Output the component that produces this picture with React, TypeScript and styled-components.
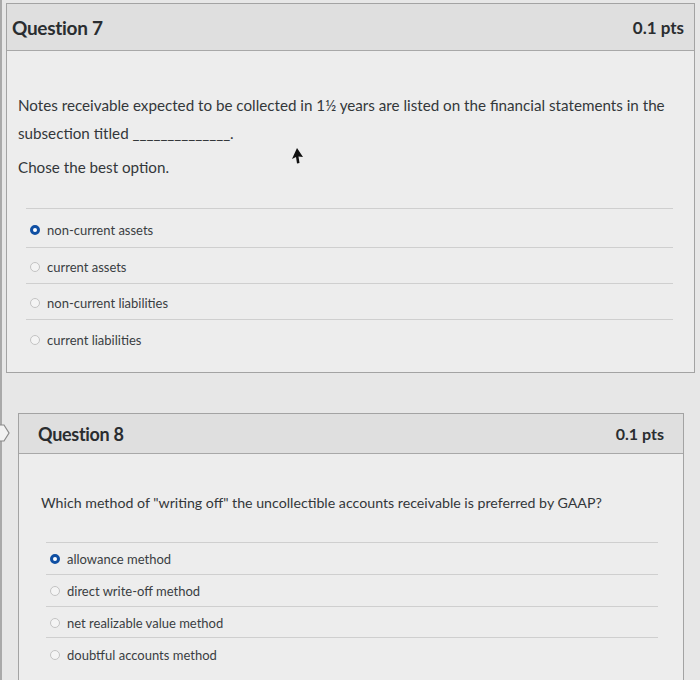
import React from "react";
import styled, { createGlobalStyle } from "styled-components";

const Global = createGlobalStyle`
  html, body { margin: 0; padding: 0; }
  body {
    background: #e7e7e7;
    font-family: Lato, "Open Sans", "Liberation Sans", sans-serif;
    color: #2f3337;
    width: 700px;
    height: 680px;
    overflow: hidden;
  }
`;

const Page = styled.div`
  position: relative;
  height: 680px;
  border-left: 2px solid #a9a9a9;
  padding-top: 3px;
  box-sizing: border-box;
  display: flex;
  flex-direction: column;
  gap: 40px;
`;

const Card = styled.section<{ $left: number; $right: number }>`
  margin-left: ${(p) => p.$left}px;
  margin-right: ${(p) => p.$right}px;
  border: 1px solid #a3a3a3;
  background: #ededed;
`;

const Header = styled.header<{ $h: number; $padL: number; $padR: number }>`
  height: ${(p) => p.$h}px;
  display: flex;
  align-items: center;
  justify-content: space-between;
  padding: 0 ${(p) => p.$padR}px 0 ${(p) => p.$padL}px;
  background: #dfdfdf;
  border-bottom: 1px solid #a8a8a8;
`;

const Title = styled.h2<{ $size: number }>`
  margin: 0;
  font-size: ${(p) => p.$size}px;
  font-weight: 700;
  color: #2a2d30;
  letter-spacing: -0.3px;
`;

const Points = styled.span<{ $size: number }>`
  font-size: ${(p) => p.$size}px;
  font-weight: 700;
  color: #2a2d30;
`;

const Body = styled.div<{ $top: number; $left: number; $bottom: number }>`
  padding: ${(p) => p.$top}px ${(p) => p.$left}px ${(p) => p.$bottom}px;
`;

const Para = styled.p<{ $size: number }>`
  margin: 0 0 6px;
  font-size: ${(p) => p.$size}px;
  line-height: 28px;
  color: #33373a;
`;

const Answers = styled.div<{ $mt: number; $inset: number; $insetR: number }>`
  margin: ${(p) => p.$mt}px ${(p) => p.$insetR}px 0 ${(p) => p.$inset}px;
  border-top: 1px solid #cfcfcf;
  display: flex;
  flex-direction: column;
`;

const Row = styled.label<{ $h: number; $pt: number }>`
  height: ${(p) => p.$h}px;
  box-sizing: border-box;
  display: flex;
  align-items: center;
  gap: 7px;
  padding: ${(p) => p.$pt}px 0 0 4px;
  font-size: 13px;
  color: #3a3e42;
  border-bottom: 1px solid #cfcfcf;
  &:last-child { border-bottom: none; }
`;

const Radio = styled.span<{ $on: boolean }>`
  width: 10px;
  height: 10px;
  box-sizing: border-box;
  border-radius: 50%;
  flex: none;
  background: ${(p) => (p.$on ? "#ffffff" : "#f4f4f4")};
  border: ${(p) => (p.$on ? "3px solid #0f4fa3" : "1px solid #c3c3c3")};
`;

const Flag = styled.svg`
  position: absolute;
  left: -2px;
  top: 424px;
`;

const Cursor = styled.svg`
  position: absolute;
  left: 288px;
  top: 148px;
`;

type Q = {
  title: string;
  answers: string[];
  selected: number;
};

const q7: Q = {
  title: "Question 7",
  answers: ["non-current assets", "current assets", "non-current liabilities", "current liabilities"],
  selected: 0,
};

const q8: Q = {
  title: "Question 8",
  answers: ["allowance method", "direct write-off method", "net realizable value method", "doubtful accounts method"],
  selected: 0,
};

const q7Rows = [39, 36, 36, 36];
const q8Rows = [32, 32, 31, 32];

export default function App() {
  return (
    <>
      <Global />
      <Page>
        <Card $left={4} $right={5}>
          <Header $h={46} $padL={5} $padR={10}>
            <Title $size={19}>{q7.title}</Title>
            <Points $size={17}>0.1 pts</Points>
          </Header>
          <Body $top={40} $left={11} $bottom={16}>
            <Para $size={15.2}>
              Notes receivable expected to be collected in 1½ years are listed on the financial statements in the subsection titled ______________.
            </Para>
            <Para $size={15.2}>Chose the best option.</Para>
            <Answers $mt={27} $inset={8} $insetR={10}>
              {q7.answers.map((a, i) => (
                <Row key={a} $h={q7Rows[i]} $pt={3}>
                  <Radio $on={i === q7.selected} />
                  {a}
                </Row>
              ))}
            </Answers>
          </Body>
        </Card>

        <Card $left={16} $right={16}>
          <Header $h={39} $padL={19} $padR={19}>
            <Title $size={18}>{q8.title}</Title>
            <Points $size={16}>0.1 pts</Points>
          </Header>
          <Body $top={35} $left={22} $bottom={20}>
            <Para $size={14.2}>Which method of "writing off" the uncollectible accounts receivable is preferred by GAAP?</Para>
            <Answers $mt={25} $inset={5} $insetR={3}>
              {q8.answers.map((a, i) => (
                <Row key={a} $h={q8Rows[i]} $pt={1}>
                  <Radio $on={i === q8.selected} />
                  {a}
                </Row>
              ))}
            </Answers>
          </Body>
        </Card>

        <Flag width="12" height="18" viewBox="0 0 12 18">
          <path d="M0 1 H4 L9 9 L4 17 H0" fill="#f2f2f2" stroke="#8a8a8a" strokeWidth="1.2" />
        </Flag>
        <Cursor width="14" height="16" viewBox="0 0 14 16">
          <path d="M7 0 L13 9 L8.5 8.5 L9.5 15 L7 15.5 L6 9 L2 11 Z" fill="#111" />
        </Cursor>
      </Page>
    </>
  );
}
